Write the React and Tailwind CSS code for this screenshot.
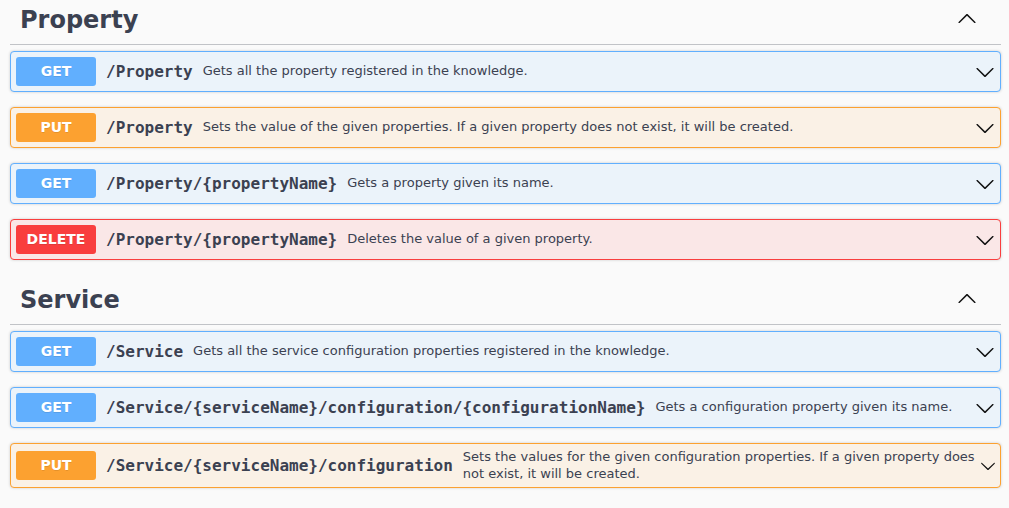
import React from 'react';

const methodStyles = {
    GET: { block: 'border-[#61affe] bg-[#ebf3fa]', badge: 'bg-[#61affe]' },
    PUT: { block: 'border-[#fca130] bg-[#faf1e6]', badge: 'bg-[#fca130]' },
    DELETE: { block: 'border-[#f93e3e] bg-[#fae7e7]', badge: 'bg-[#f93e3e]' },
};

const sections = [
    {
        name: 'Property',
        ops: [
            { method: 'GET', path: '/Property', desc: 'Gets all the property registered in the knowledge.' },
            { method: 'PUT', path: '/Property', desc: 'Sets the value of the given properties. If a given property does not exist, it will be created.' },
            { method: 'GET', path: '/Property/{propertyName}', desc: 'Gets a property given its name.' },
            { method: 'DELETE', path: '/Property/{propertyName}', desc: 'Deletes the value of a given property.' },
        ],
    },
    {
        name: 'Service',
        ops: [
            { method: 'GET', path: '/Service', desc: 'Gets all the service configuration properties registered in the knowledge.' },
            { method: 'GET', path: '/Service/{serviceName}/configuration/{configurationName}', desc: 'Gets a configuration property given its name.' },
            { method: 'PUT', path: '/Service/{serviceName}/configuration', desc: 'Sets the values for the given configuration properties. If a given property does not exist, it will be created.', small: true },
        ],
    },
];

const ArrowDown = ({ small }) => (
    <svg viewBox="0 0 20 20" className={`shrink-0 ${small ? 'w-[16px] h-[16px] mr-[-1px]' : 'w-[20px] h-[20px]'}`} fill="#111">
        <path d="M17.418 6.109c.272-.268.709-.268.979 0s.271.701 0 .969l-7.908 7.83c-.27.268-.707.268-.979 0l-7.908-7.83c-.27-.268-.27-.701 0-.969.271-.268.709-.268.979 0L10 13.25l7.418-7.141z" />
    </svg>
);

const ArrowUp = () => (
    <svg viewBox="0 0 20 20" className="w-[20px] h-[20px] mb-1 mr-[24px]" fill="#111">
        <path d="M17.418 14.908c.272.268.709.268.979 0s.271-.701 0-.969l-7.908-7.83c-.27-.268-.707-.268-.979 0l-7.908 7.83c-.27.268-.27.701 0 .969.271.268.709.268.979 0L10 7.767l7.418 7.141z" />
    </svg>
);

const Operation = ({ op }) => {
    const s = methodStyles[op.method];
    return (
        <div className={`flex items-center p-[5px] mb-[15px] border rounded-[4px] shadow-[0_0_3px_rgba(0,0,0,0.19)] ${s.block}`}>
            <span className={`w-[80px] h-[29px] shrink-0 flex items-center justify-center rounded-[3px] text-white text-[14px] font-bold [text-shadow:0_1px_0_rgba(0,0,0,0.1)] ${s.badge}`}>
                {op.method}
            </span>
            <span className="px-[10px] whitespace-nowrap font-['DejaVu_Sans_Mono',monospace] text-[16px] font-bold">
                {op.path}
            </span>
            <span className="flex-1 text-[13px] leading-[16.5px]">{op.desc}</span>
            <ArrowDown small={op.small} />
        </div>
    );
};

export default function App() {
    return (
        <div className="min-h-screen bg-[#fafafa] pl-[10px] pr-[8px] text-[#3b4151] font-['DejaVu_Sans',sans-serif]">
            {sections.map(section => (
                <div key={section.name} className="flex flex-col pb-[5px]">
                    <div className="h-[45px] flex items-center justify-between pb-[4px] border-b border-[#c1c3c7] mb-[6px]">
                        <h3 className="pl-[10px] text-[24px] font-bold leading-[28px]">{section.name}</h3>
                        <ArrowUp />
                    </div>
                    {section.ops.map((op, i) => (
                        <Operation key={i} op={op} />
                    ))}
                </div>
            ))}
        </div>
    );
}
